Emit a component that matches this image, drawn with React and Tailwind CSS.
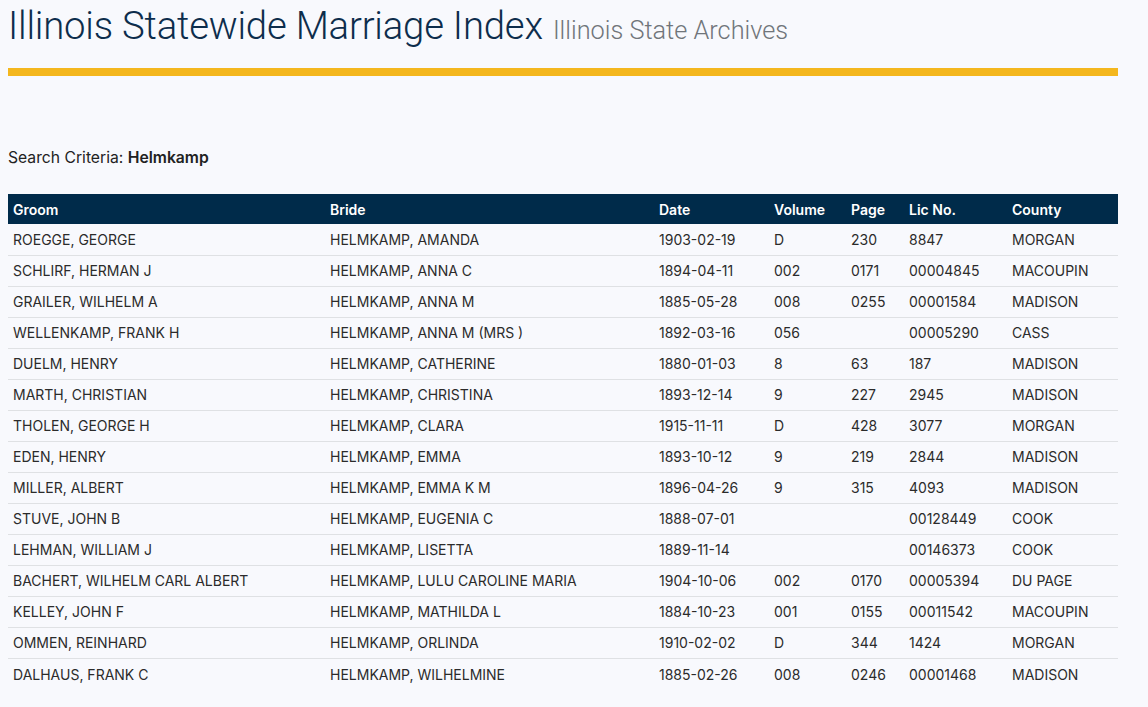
import React from 'react';

const rows = [
  ['ROEGGE, GEORGE', 'HELMKAMP, AMANDA', '1903-02-19', 'D', '230', '8847', 'MORGAN'],
  ['SCHLIRF, HERMAN J', 'HELMKAMP, ANNA C', '1894-04-11', '002', '0171', '00004845', 'MACOUPIN'],
  ['GRAILER, WILHELM A', 'HELMKAMP, ANNA M', '1885-05-28', '008', '0255', '00001584', 'MADISON'],
  ['WELLENKAMP, FRANK H', 'HELMKAMP, ANNA M (MRS )', '1892-03-16', '056', '', '00005290', 'CASS'],
  ['DUELM, HENRY', 'HELMKAMP, CATHERINE', '1880-01-03', '8', '63', '187', 'MADISON'],
  ['MARTH, CHRISTIAN', 'HELMKAMP, CHRISTINA', '1893-12-14', '9', '227', '2945', 'MADISON'],
  ['THOLEN, GEORGE H', 'HELMKAMP, CLARA', '1915-11-11', 'D', '428', '3077', 'MORGAN'],
  ['EDEN, HENRY', 'HELMKAMP, EMMA', '1893-10-12', '9', '219', '2844', 'MADISON'],
  ['MILLER, ALBERT', 'HELMKAMP, EMMA K M', '1896-04-26', '9', '315', '4093', 'MADISON'],
  ['STUVE, JOHN B', 'HELMKAMP, EUGENIA C', '1888-07-01', '', '', '00128449', 'COOK'],
  ['LEHMAN, WILLIAM J', 'HELMKAMP, LISETTA', '1889-11-14', '', '', '00146373', 'COOK'],
  ['BACHERT, WILHELM CARL ALBERT', 'HELMKAMP, LULU CAROLINE MARIA', '1904-10-06', '002', '0170', '00005394', 'DU PAGE'],
  ['KELLEY, JOHN F', 'HELMKAMP, MATHILDA L', '1884-10-23', '001', '0155', '00011542', 'MACOUPIN'],
  ['OMMEN, REINHARD', 'HELMKAMP, ORLINDA', '1910-02-02', 'D', '344', '1424', 'MORGAN'],
  ['DALHAUS, FRANK C', 'HELMKAMP, WILHELMINE', '1885-02-26', '008', '0246', '00001468', 'MADISON'],
];

const headers = ['Groom', 'Bride', 'Date', 'Volume', 'Page', 'Lic No.', 'County'];
const widths = ['w-[317px]', 'w-[329px]', 'w-[115px]', 'w-[77px]', 'w-[58px]', 'w-[103px]', 'w-[111px]'];

export default function App() {
  return (
    <div className="min-h-[707px] bg-[#f8f9fd] px-2 pt-1 font-['Inter',sans-serif]">
      <header className="flex items-baseline gap-[10px]">
        <h1 className="text-[38.3px] leading-[44px] font-light text-[#0d2d4c] font-['Roboto',sans-serif] tracking-[-0.2px]">
          Illinois Statewide Marriage Index
        </h1>
        <span className="text-[25.3px] font-light text-[#70757a] font-['Roboto',sans-serif]">Illinois State Archives</span>
      </header>
      <div className="mt-[18px] h-[8px] w-[1110px] bg-[#f4b71e]" />

      <p className="mt-[70px] text-[15.7px] text-[#222]">
        Search Criteria: <strong className="font-semibold">Helmkamp</strong>
      </p>

      <table className="mt-[25px] w-[1110px] table-fixed border-collapse text-[14px]">
        <thead>
          <tr className="h-[30px] bg-[#002b4a] text-white">
            {headers.map((h, i) => (
              <th key={h} className={`${widths[i]} px-[5px] text-left font-semibold`}>{h}</th>
            ))}
          </tr>
        </thead>
        <tbody>
          {rows.map((r, ri) => (
            <tr key={ri} className="h-[31px] border-b border-[#dfe1e4] last:border-b-0 text-[#2b2b2b]">
              {r.map((c, ci) => (
                <td key={ci} className="px-[5px] whitespace-nowrap">{c}</td>
              ))}
            </tr>
          ))}
        </tbody>
      </table>
    </div>
  );
}
